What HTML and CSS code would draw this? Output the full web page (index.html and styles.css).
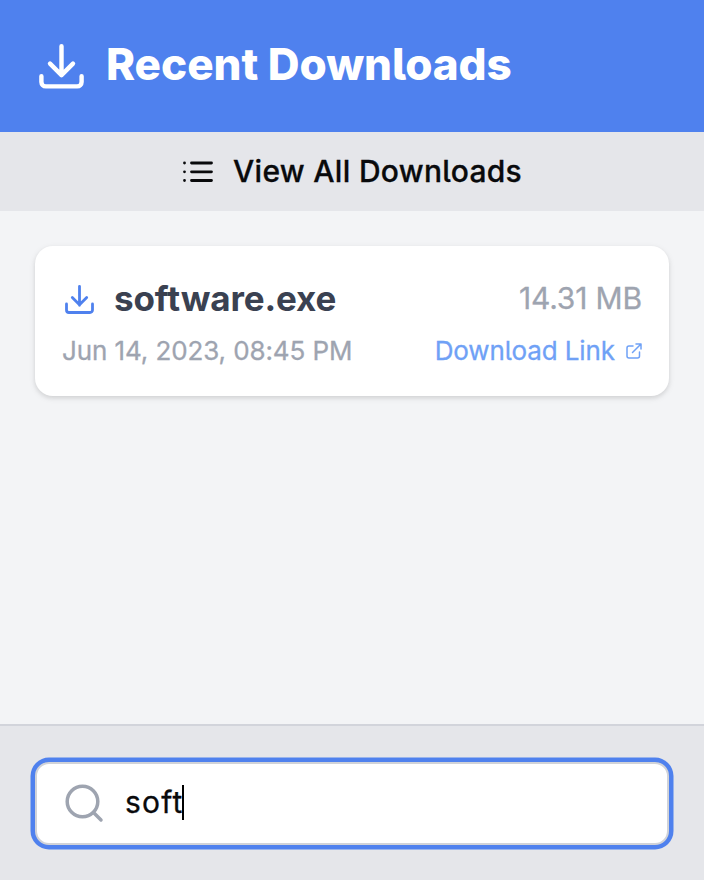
FILE: index.html
```
<!DOCTYPE html>
<html lang="en">
<head>
<meta charset="utf-8">
<title>Recent Downloads</title>
<link rel="stylesheet" href="styles.css">
</head>
<body>
<div class="popup">
  <header class="header">
    <svg class="header-icon" viewBox="0 0 24 24"><path d="M2.900 16.400v2.600a2 2 0 0 0 2 2h14.200a2 2 0 0 0 2-2v-2.600M12 2.800v12.900M6.800 10.700l5.200 5.200 5.200-5.200"/></svg>
    <h1 class="title">Recent Downloads</h1>
  </header>
  <button class="view-all">
    <svg class="list-icon" viewBox="0 0 30 22"><path d="M8.500 2h20M8.500 10.800h20M8.500 19.500h20M1.500 2h.01M1.500 10.800h.01M1.500 19.500h.01"/></svg>
    <span class="view-label">View <span class="plain">All</span> Downloads</span>
  </button>
  <main class="list">
    <article class="card">
      <div class="row">
        <div class="file"><svg class="file-icon" viewBox="0 0 32 32"><path d="M2.500 21v6a2.500 2.500 0 0 0 2.500 2.500h21a2.500 2.500 0 0 0 2.500-2.500v-6M15.500 3.300v19M8.300 14.600l7.200 7.200 7.200-7.200"/></svg><span class="name">software.exe</span></div>
        <span class="size">14.31 MB</span>
      </div>
      <div class="row meta">
        <span class="date">Jun 14, 2023, 08:45 PM</span>
        <a class="link"><span class="link-label">Download Link</span><svg class="link-icon" viewBox="0 0 16 16"><path d="M7 3H3a2 2 0 0 0-2 2v8a2 2 0 0 0 2 2h8.500a2 2 0 0 0 2-2V9M6.500 9.500L15 1M10 1h5v5"/></svg></a>
      </div>
    </article>
  </main>
  <footer class="footer">
    <label class="search">
      <svg class="search-icon" viewBox="0 0 38 38"><circle cx="17.500" cy="16.500" r="15.300"/><path d="M28.500 27.500l7.500 7.500"/></svg>
      <span class="query">soft</span><span class="caret"></span>
    </label>
  </footer>
</div>
</body>
</html>
```
FILE: styles.css
```
* { box-sizing: border-box; }
body { margin: 0; background: #fff; font-family: Inter, "Liberation Sans", sans-serif; font-feature-settings: "cv05"; }
svg { fill: none; stroke: currentColor; stroke-linecap: round; stroke-linejoin: round; flex: none; display: block; overflow: visible; }
.popup { width: 704px; height: 880px; display: flex; flex-direction: column; background: #f3f4f6; white-space: nowrap; }
.header { height: 132px; padding: 0 35px; display: flex; align-items: center; gap: 18px; background: #4f81ee; color: #fff; }
.header-icon { width: 53px; height: 53px; stroke-width: 2; }
.title { margin: 0 0 4px; font-size: 44px; line-height: 56px; font-weight: 800; letter-spacing: -0.050px; }
.view-all { height: 79px; border: 0; padding: 0 0 0 1px; display: flex; align-items: center; justify-content: center; gap: 20px; background: #e5e6ea; color: #090a0c; font: inherit; font-feature-settings: "cv05"; }
.list-icon { width: 30px; height: 22px; stroke-width: 2.800; }
.view-label { font-size: 30px; font-weight: 500; letter-spacing: 0.300px; margin-bottom: 2px; -webkit-text-stroke: 0.300px; }
.plain { font-feature-settings: normal; }
.list { flex: 1; padding: 35px; }
.card { height: 150px; padding: 30px 27px 0 28px; border-radius: 18px; background: #fff; box-shadow: 0 2px 6px rgba(0,0,0,.1), 0 2px 4px rgba(0,0,0,.06); }
.row { display: flex; align-items: center; justify-content: space-between; height: 46px; }
.file { display: flex; align-items: center; gap: 18px; color: #3a4151; }
.file-icon { width: 32px; height: 32px; stroke-width: 2.800; color: #4f81ee; margin-left: 1px; }
.name { font-size: 35px; font-weight: 700; letter-spacing: -0.120px; margin-bottom: 2px; }
.size { font-size: 30px; color: #9ea4b0; letter-spacing: -0.150px; margin-bottom: 2px; -webkit-text-stroke: 0.300px; }
.meta { height: 56px; }
.date { font-size: 26px; color: #9ea4b0; letter-spacing: -0.100px; margin-left: -1px; -webkit-text-stroke: 0.300px; }
.link { display: flex; align-items: center; gap: 11px; color: #6fa1f6; }
.link-label { font-size: 26px; letter-spacing: -0.100px; -webkit-text-stroke: 0.300px; }
.link-icon { width: 16px; height: 16px; stroke-width: 1.500; margin-top: 2px; }
.footer { height: 156px; padding: 36px 35px; border-top: 2px solid #d2d4db; background: #e5e6ea; }
.search { height: 83px; display: flex; align-items: center; padding: 0 28px; border: 2px solid #d1d3d8; border-radius: 14px; background: #fff; box-shadow: 0 0 0 4.500px #4f81ee; color: #090a0c; }
.search-icon { width: 38px; height: 38px; stroke-width: 3.500; color: #9ea4b0; margin-right: 22px; }
.query { font-size: 30px; letter-spacing: 1.200px; margin: 0 -2px 3px 0; -webkit-text-stroke: 0.300px; }
.caret { width: 2px; height: 35px; background: #000; margin-bottom: 2px; }
```
